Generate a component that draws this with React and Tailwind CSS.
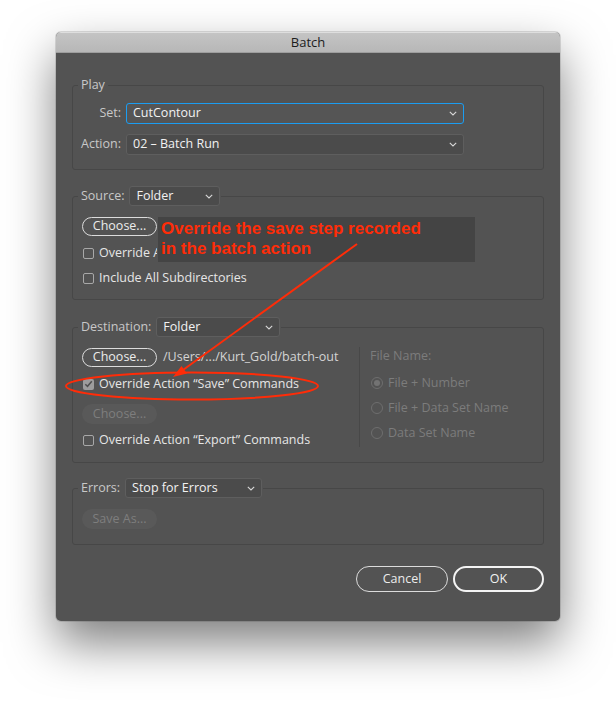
import React from "react";

function Chevron() {
  return (
    <svg width="8" height="5" viewBox="0 0 8 5" className="shrink-0">
      <path d="M0.8 0.8 L4 3.9 L7.2 0.8" fill="none" stroke="#d8d8d8" strokeWidth="1.1" />
    </svg>
  );
}

function Select({ value, className = "", focused = false }) {
  return (
    <div
      className={
        "flex items-center justify-between rounded-[3px] border pl-[6px] pr-[6px] text-[12.5px] text-[#f2f2f2] " +
        (focused ? "border-[#1b9df2] bg-[#555555] " : "border-[#5e5e5e] bg-[#4b4b4b] ") +
        className
      }
    >
      <span className="whitespace-nowrap">{value}</span>
      <Chevron />
    </div>
  );
}

function PillButton({ children, className = "" }) {
  return (
    <div
      className={
        "flex items-center justify-center rounded-full border border-[#dcdcdc] text-[12.5px] text-[#ececec] " +
        className
      }
    >
      {children}
    </div>
  );
}

function DisabledButton({ children }) {
  return (
    <div className="flex h-[20px] w-[75px] items-center justify-center rounded-full bg-[#595959] text-[12.5px] text-[#7e7e7e]">
      {children}
    </div>
  );
}

function Checkbox({ label, checked = false, clip = "" }) {
  return (
    <div className={"flex h-[20px] items-center gap-[5px] text-[12.5px] text-[#e6e6e6] " + clip}>
      {checked ? (
        <div className="ml-[1px] flex h-[11px] w-[11px] shrink-0 items-center justify-center rounded-[2px] bg-[#9d9d9d]">
          <svg width="9" height="8" viewBox="0 0 9 8">
            <path d="M1.3 4.2 L3.5 6.3 L7.8 1.2" fill="none" stroke="#505050" strokeWidth="1.5" />
          </svg>
        </div>
      ) : (
        <div className="ml-[1px] h-[11px] w-[11px] shrink-0 rounded-[2px] border border-[#a8a8a8]" />
      )}
      <span className="whitespace-nowrap">{label}</span>
    </div>
  );
}

function Radio({ label, selected = false }) {
  return (
    <div className="flex h-[20px] items-center gap-[5px] text-[12.5px] text-[#7c7c7c]">
      <div className="ml-[1px] flex h-[12px] w-[12px] items-center justify-center rounded-full border border-[#6e6e6e]">
        {selected && <div className="h-[6px] w-[6px] rounded-full bg-[#737373]" />}
      </div>
      <span className="whitespace-nowrap">{label}</span>
    </div>
  );
}

export default function App() {
  return (
    <div className="relative h-[701px] w-[616px] overflow-hidden bg-white pl-[56px] pt-[32px] font-['Open_Sans',sans-serif]">
      <div className="flex h-[589px] w-[504px] flex-col overflow-hidden rounded-[5px] bg-[#535353] shadow-[0_22px_48px_rgba(0,0,0,0.5),0_0_0_1px_rgba(0,0,0,0.12)]">
        {/* title bar */}
        <div className="flex h-[21px] shrink-0 items-center justify-center border-b border-[#9e9e9e] border-t border-t-[#dedede] bg-gradient-to-b from-[#c4c4c4] to-[#b7b7b7] text-[13px] text-[#1c1c1c]">
          Batch
        </div>

        <div className="flex flex-1 flex-col px-[16px]">
          {/* Play */}
          <fieldset className="mt-[24px] rounded-[3px] border border-[#474747] pb-[14px]">
            <legend className="ml-[5px] h-[16px] px-[3px] text-[12.5px] leading-[16px] text-[#c8c8c8]">Play</legend>
            <div className="flex flex-col gap-[10px] pl-[8px] pt-[10px]">
              <div className="flex items-center gap-[5px]">
                <div className="w-[40px] text-right text-[12.5px] text-[#c8c8c8]">Set:</div>
                <Select value="CutContour" focused className="h-[21px] w-[338px]" />
              </div>
              <div className="flex items-center gap-[5px]">
                <div className="w-[40px] text-right text-[12.5px] text-[#c8c8c8]">Action:</div>
                <Select value="02 – Batch Run" className="h-[21px] w-[338px]" />
              </div>
            </div>
          </fieldset>

          {/* Source */}
          <fieldset className="mt-[16px] rounded-[3px] border border-[#474747] pb-[11px]">
            <legend className="ml-[5px] flex h-[20px] items-center gap-[5px] pl-[3px] pr-[1px] text-[12.5px] text-[#c8c8c8]">
              <span>Source:</span>
              <Select value="Folder" className="h-[20px] w-[91px]" />
            </legend>
            <div className="flex flex-col pl-[9px] pt-[11px]">
              <PillButton className="h-[19px] w-[75px]">Choose...</PillButton>
              <div className="mt-[7px]">
                <Checkbox label="Override Action “Open” Commands" clip="w-[75px] overflow-hidden" />
              </div>
              <div className="mt-[5px]">
                <Checkbox label="Include All Subdirectories" />
              </div>
            </div>
          </fieldset>

          {/* Destination */}
          <fieldset className="mt-[17px] rounded-[3px] border border-[#474747] pb-[12px]">
            <legend className="ml-[5px] flex h-[20px] items-center gap-[5px] pl-[3px] pr-[1px] text-[12.5px] text-[#c8c8c8]">
              <span>Destination:</span>
              <Select value="Folder" className="h-[20px] w-[124px]" />
            </legend>
            <div className="flex pl-[9px]">
              <div className="flex w-[277px] flex-col pt-[11px]">
                <div className="flex items-center gap-[6px]">
                  <PillButton className="h-[19px] w-[75px]">Choose...</PillButton>
                  <span className="whitespace-nowrap text-[12.5px] text-[#d4d4d4]">/Users/.../Kurt_Gold/batch-out</span>
                </div>
                <div className="mt-[7px]">
                  <Checkbox label="Override Action “Save” Commands" checked />
                </div>
                <div className="mt-[10px]">
                  <DisabledButton>Choose...</DisabledButton>
                </div>
                <div className="mt-[6px]">
                  <Checkbox label="Override Action “Export” Commands" />
                </div>
              </div>
              <div className="mt-[10px] h-[100px] w-[1px] bg-[#484848]" />
              <div className="ml-[10px] flex flex-col pt-[11px]">
                <div className="h-[16px] text-[12.5px] leading-[16px] text-[#7c7c7c]">File Name:</div>
                <div className="mt-[9px] flex flex-col gap-[5px]">
                  <Radio label="File + Number" selected />
                  <Radio label="File + Data Set Name" />
                  <Radio label="Data Set Name" />
                </div>
              </div>
            </div>
          </fieldset>

          {/* Errors */}
          <fieldset className="mt-[15px] rounded-[3px] border border-[#474747] pb-[15px]">
            <legend className="ml-[5px] flex h-[20px] items-center gap-[5px] pl-[3px] pr-[1px] text-[12.5px] text-[#c8c8c8]">
              <span>Errors:</span>
              <Select value="Stop for Errors" className="h-[20px] w-[137px]" />
            </legend>
            <div className="pl-[9px] pt-[11px]">
              <DisabledButton>Save As...</DisabledButton>
            </div>
          </fieldset>

          {/* buttons */}
          <div className="mt-[21px] flex justify-end gap-[5px]">
            <PillButton className="h-[26px] w-[92px]">Cancel</PillButton>
            <div className="flex h-[26px] w-[91px] items-center justify-center rounded-full border-2 border-[#f4f4f4] text-[12.5px] text-[#f2f2f2]">
              OK
            </div>
          </div>
        </div>
      </div>

      {/* annotation box */}
      <div className="absolute left-[158px] top-[217px] h-[45px] w-[317px] bg-[#444444] pl-[3px] pt-[2px] font-['Liberation_Sans',Arial,sans-serif] text-[17px] font-bold leading-[20px] text-[#ff2c08]">
        <div>Override the save step recorded</div>
        <div>in the batch action</div>
      </div>

      {/* arrow & ellipse */}
      <svg className="pointer-events-none absolute left-0 top-0" width="616" height="701" viewBox="0 0 616 701">
        <line x1="357" y1="244" x2="183" y2="370" stroke="#ff2c08" strokeWidth="2" />
        <polygon points="173,377 181.5,366 187,373.5" fill="#ff2c08" />
        <ellipse cx="192" cy="386" rx="126" ry="13.5" fill="none" stroke="#ff2c08" strokeWidth="2" />
      </svg>
    </div>
  );
}
